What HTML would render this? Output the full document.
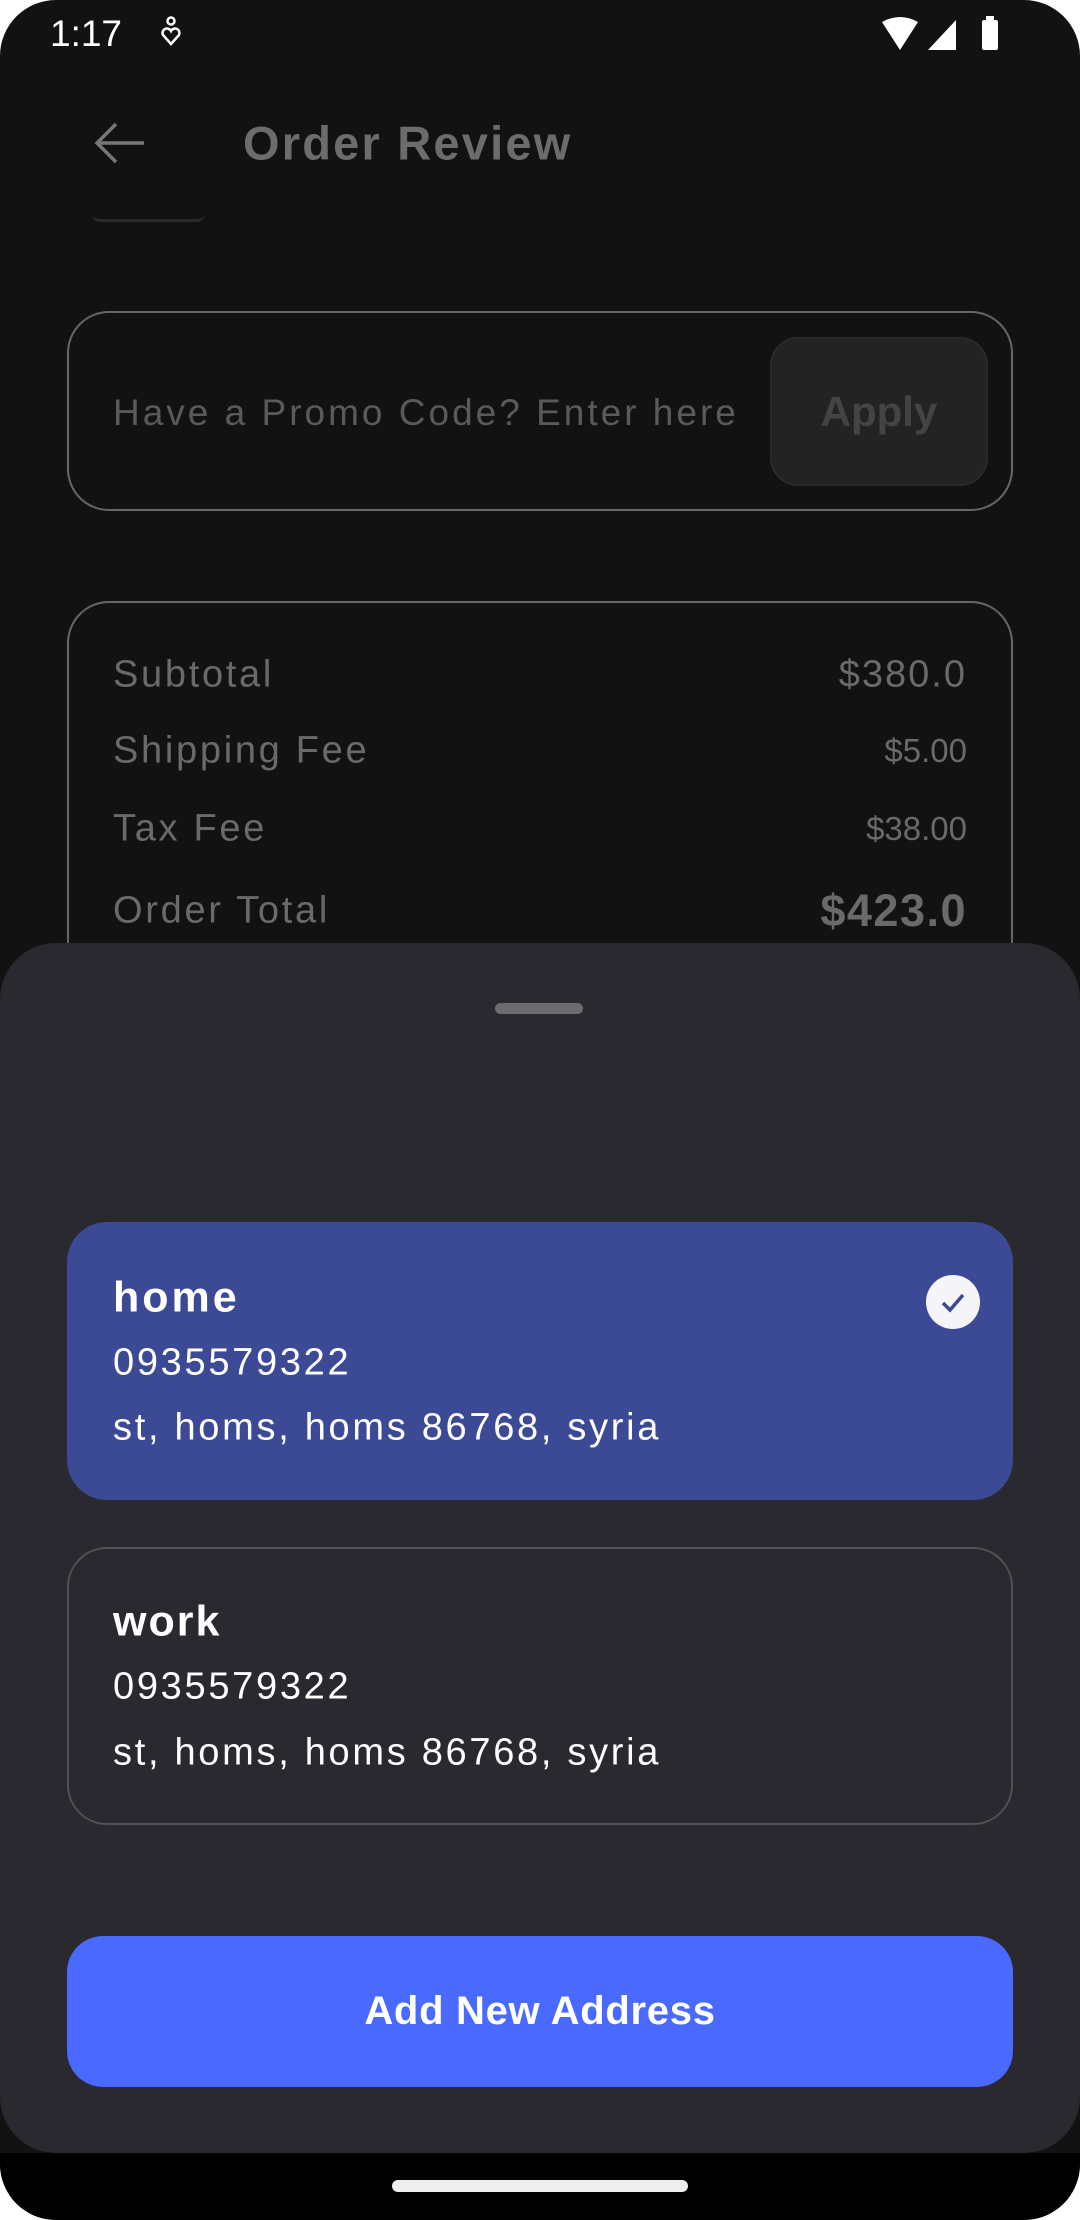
<!DOCTYPE html>
<html><head><meta charset="utf-8"><style>
*{margin:0;padding:0;box-sizing:border-box}
html,body{width:1080px;height:2220px;background:#fff;overflow:hidden}
body{font-family:"Liberation Sans",sans-serif}
#scr{position:absolute;left:0;top:0;width:1080px;height:2220px;background:#121212;border-radius:56px;overflow:hidden}
.a{position:absolute;white-space:nowrap}
.t{transform:translateY(-50%)}
.l{letter-spacing:2.7px}
</style></head><body>
<div id="scr">
 <div class="a t" style="left:50px;top:34px;color:#fff;font-size:37px">1:17</div>
 <svg class="a" style="left:158px;top:16px" width="26" height="32" viewBox="0 0 26 32"><circle cx="13" cy="5" r="3.5" fill="none" stroke="#fff" stroke-width="2.5"/><path d="M13 28 L5 19 A4 4 0 0 1 13 15 A4 4 0 0 1 21 19 Z" fill="none" stroke="#fff" stroke-width="2.5"/></svg>
 <svg class="a" style="left:880px;top:16px" width="130" height="36" viewBox="0 0 130 36"><path d="M2 6 Q20 -4 38 6 L20 34 Z" fill="#fff"/><path d="M48 34 L76 4 L76 34 Z" fill="#fff"/><rect x="102" y="4" width="16" height="30" rx="2" fill="#fff"/><rect x="106" y="0" width="8" height="5" fill="#fff"/></svg>
 <svg class="a" style="left:92px;top:120px" width="60" height="46" viewBox="0 0 60 46"><path d="M52 23 H6 M24 4 L5 23 L24 42" fill="none" stroke="#777" stroke-width="3.5"/></svg>
 <div class="a t" style="left:243px;top:143px;color:#6c6c6c;font-size:47px;font-weight:bold;letter-spacing:2.2px">Order Review</div>
 <div class="a" style="left:92px;top:214px;width:113px;height:8px;border-bottom:3px solid #2a2a2a;border-radius:0 0 20px 20px"></div>

 <div class="a" style="left:67px;top:311px;width:946px;height:200px;border:2px solid #666;border-radius:42px"></div>
 <div class="a t" style="left:113px;top:413px;color:#5a5a5a;font-size:37px;letter-spacing:3px">Have a Promo Code? Enter here</div>
 <div class="a" style="left:770px;top:337px;width:218px;height:149px;background:#232323;border:2px solid #2a2a2a;border-radius:28px;color:#444;font-size:42px;font-weight:bold;text-align:center;line-height:145px">Apply</div>

 <div class="a" style="left:67px;top:601px;width:946px;height:500px;border:2px solid #666;border-radius:42px"></div>
 <div class="a t l" style="left:113px;top:675px;color:#6a6a6a;font-size:38px">Subtotal</div>
 <div class="a t" style="right:113px;top:675px;color:#6a6a6a;font-size:38px;letter-spacing:2px">$380.0</div>
 <div class="a t l" style="left:113px;top:751px;color:#6a6a6a;font-size:38px">Shipping Fee</div>
 <div class="a t" style="right:113px;top:751px;color:#6a6a6a;font-size:33px">$5.00</div>
 <div class="a t l" style="left:113px;top:829px;color:#6a6a6a;font-size:38px">Tax Fee</div>
 <div class="a t" style="right:113px;top:829px;color:#6a6a6a;font-size:33px">$38.00</div>
 <div class="a t l" style="left:113px;top:911px;color:#6a6a6a;font-size:38px">Order Total</div>
 <div class="a t" style="right:113px;top:911px;color:#6a6a6a;font-size:45px;font-weight:bold;letter-spacing:1.5px">$423.0</div>

 <div class="a" style="left:0;top:943px;width:1080px;height:1210px;background:#2a292f;border-radius:56px"></div>
 <div class="a" style="left:495px;top:1003px;width:88px;height:11px;background:#6c6b70;border-radius:6px"></div>

 <div class="a" style="left:67px;top:1222px;width:946px;height:278px;background:#3c4a96;border-radius:40px"></div>
 <div class="a t" style="left:113px;top:1298px;color:#fff;font-size:43px;font-weight:bold;letter-spacing:3px">home</div>
 <div class="a t l" style="left:113px;top:1363px;color:#fff;font-size:38px">0935579322</div>
 <div class="a t l" style="left:113px;top:1428px;color:#fff;font-size:38px">st, homs, homs 86768, syria</div>
 <svg class="a" style="left:926px;top:1275px" width="54" height="54" viewBox="0 0 54 54"><circle cx="27" cy="27" r="27" fill="#f5f5f7"/><path d="M17 28 L24 35 L37 20" fill="none" stroke="#3c4a96" stroke-width="3.5"/></svg>

 <div class="a" style="left:67px;top:1547px;width:946px;height:278px;border:2px solid #505056;border-radius:40px"></div>
 <div class="a t" style="left:113px;top:1622px;color:#fff;font-size:43px;font-weight:bold;letter-spacing:2px">work</div>
 <div class="a t l" style="left:113px;top:1687px;color:#fff;font-size:38px">0935579322</div>
 <div class="a t l" style="left:113px;top:1753px;color:#fff;font-size:38px">st, homs, homs 86768, syria</div>

 <div class="a" style="left:67px;top:1936px;width:946px;height:151px;background:#4a69fe;border-radius:36px;color:#fff;font-size:40px;font-weight:bold;text-align:center;line-height:151px;letter-spacing:0.7px">Add New Address</div>

 <div class="a" style="left:0;top:2153px;width:1080px;height:67px;background:#000"></div>
 <div class="a" style="left:392px;top:2180px;width:296px;height:12px;background:#eee;border-radius:6px"></div>
</div>
</body></html>
